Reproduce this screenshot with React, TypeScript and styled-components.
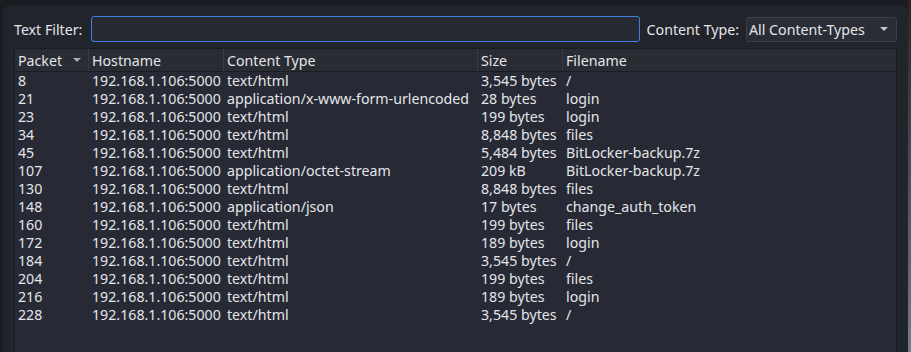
import styled, {createGlobalStyle} from 'styled-components'

const GlobalStyle = createGlobalStyle`
  html, body {
    margin: 0;
    height: 100%;
    overflow: hidden;
  }
  body {
    background:
      linear-gradient(to bottom, #2b2427, #4a5058 50%, #6f7f8e) right top / 3px 100% no-repeat,
      #1b1c21;
    font-family: 'Noto Sans', 'DejaVu Sans', sans-serif;
    font-size: 14.2px;
    color: #e3e5e8;
  }
`

const Window = styled.div`
  margin: 5px 3px 0 3px;
  height: 347px;
  background: #22242b;
  border-radius: 8px 8px 0 0;
  padding: 11px 11px 0 11px;
  box-sizing: border-box;
  display: flex;
  flex-direction: column;
  gap: 6px;
`

const Toolbar = styled.div`
  display: flex;
  align-items: center;
  height: 26px;
`

const Label = styled.label<{$gap: number}>`
  white-space: nowrap;
  margin-right: ${p => p.$gap}px;
`

const FilterInput = styled.input`
  flex: 1;
  min-width: 0;
  height: 26px;
  box-sizing: border-box;
  background: #262932;
  border: 1px solid #3d7fe3;
  border-radius: 3px;
  outline: none;
  color: #e3e5e8;
  font: inherit;
  margin-right: 7px;
`

const Combo = styled.div`
  flex: 0 0 151px;
  height: 25px;
  box-sizing: border-box;
  background: #2a2d36;
  border: 1px solid #3d4049;
  border-radius: 3px;
  display: flex;
  align-items: center;
  justify-content: space-between;
  padding: 0 8px 0 2px;
`

const Caret = styled.span`
  width: 0;
  height: 0;
  border-left: 4px solid transparent;
  border-right: 4px solid transparent;
  border-top: 4px solid #c4c6ca;
`

const Table = styled.div`
  flex: 1;
  background: #272a35;
  border: 1px solid #1b1c22;
  border-bottom: none;
  display: flex;
  flex-direction: column;
`

const columns = '74px 135px 254px 85px 1fr'

const HeaderRow = styled.div`
  display: grid;
  grid-template-columns: ${columns};
  height: 22px;
  background: #2a2c34;
  border-bottom: 1px solid #1c1d22;
`

const HeaderCell = styled.div<{$last?: boolean}>`
  display: flex;
  align-items: center;
  justify-content: space-between;
  padding: 0 3px;
  border-right: ${p => (p.$last ? 'none' : '1px solid #3a3c45')};
`

const SortArrow = styled.span`
  width: 0;
  height: 0;
  margin-right: 4px;
  border-left: 4px solid transparent;
  border-right: 4px solid transparent;
  border-top: 4px solid #a9abb0;
`

const Row = styled.div`
  display: grid;
  grid-template-columns: ${columns};
  height: 18px;
  line-height: 18px;
  white-space: nowrap;
`

const Cell = styled.div`
  padding: 0 3px;
`

const rows = [
  ['8', 'text/html', '3,545 bytes', '/'],
  ['21', 'application/x-www-form-urlencoded', '28 bytes', 'login'],
  ['23', 'text/html', '199 bytes', 'login'],
  ['34', 'text/html', '8,848 bytes', 'files'],
  ['45', 'text/html', '5,484 bytes', 'BitLocker-backup.7z'],
  ['107', 'application/octet-stream', '209 kB', 'BitLocker-backup.7z'],
  ['130', 'text/html', '8,848 bytes', 'files'],
  ['148', 'application/json', '17 bytes', 'change_auth_token'],
  ['160', 'text/html', '199 bytes', 'files'],
  ['172', 'text/html', '189 bytes', 'login'],
  ['184', 'text/html', '3,545 bytes', '/'],
  ['204', 'text/html', '199 bytes', 'files'],
  ['216', 'text/html', '189 bytes', 'login'],
  ['228', 'text/html', '3,545 bytes', '/'],
]

const App = () => {
  return (
    <>
      <GlobalStyle />
      <Window>
        <Toolbar>
          <Label $gap={9}>Text Filter:</Label>
          <FilterInput type="text" />
          <Label $gap={7}>Content Type:</Label>
          <Combo>
            <span>All Content-Types</span>
            <Caret />
          </Combo>
        </Toolbar>
        <Table>
          <HeaderRow>
            <HeaderCell>
              Packet
              <SortArrow />
            </HeaderCell>
            <HeaderCell>Hostname</HeaderCell>
            <HeaderCell>Content Type</HeaderCell>
            <HeaderCell>Size</HeaderCell>
            <HeaderCell $last>Filename</HeaderCell>
          </HeaderRow>
          <div>
            {rows.map(([packet, type, size, file]) => (
              <Row key={packet}>
                <Cell>{packet}</Cell>
                <Cell>192.168.1.106:5000</Cell>
                <Cell>{type}</Cell>
                <Cell>{size}</Cell>
                <Cell>{file}</Cell>
              </Row>
            ))}
          </div>
        </Table>
      </Window>
    </>
  )
}

export default App
